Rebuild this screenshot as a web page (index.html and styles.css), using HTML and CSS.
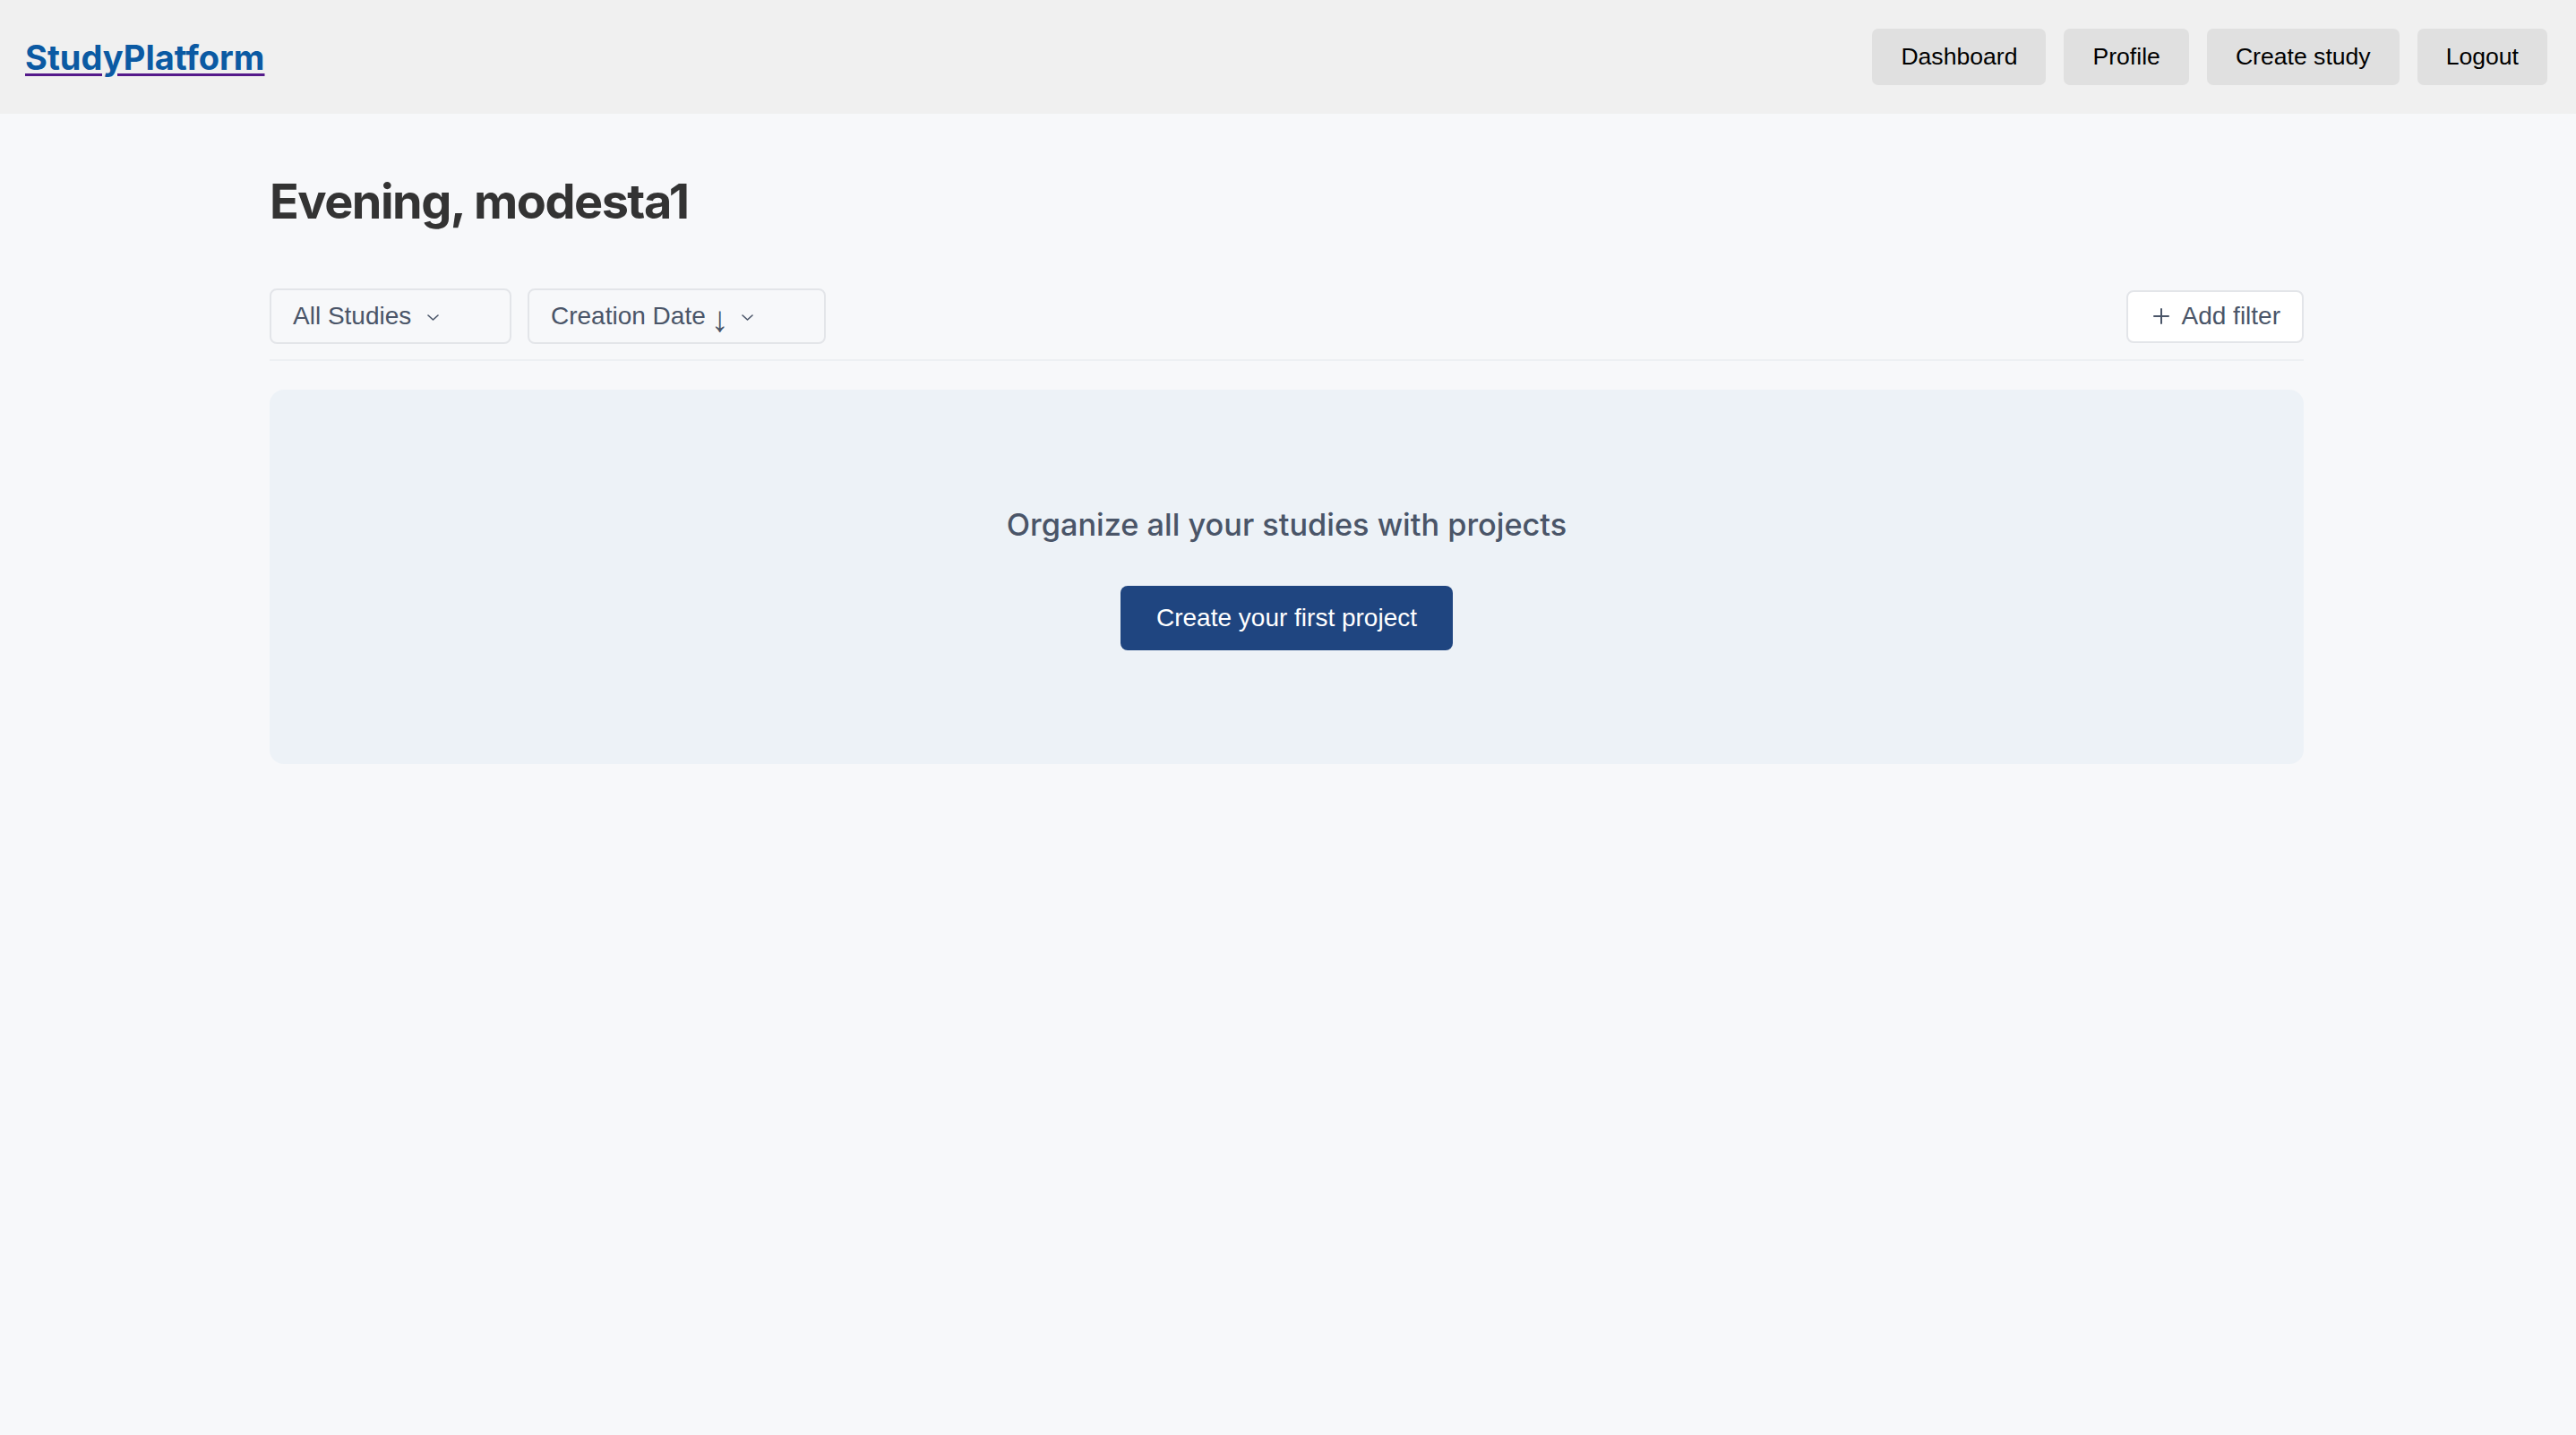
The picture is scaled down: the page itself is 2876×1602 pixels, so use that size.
FILE: index.html
```html
<!DOCTYPE html>
<html lang="en">
<head>
<meta charset="utf-8">
<title>StudyPlatform</title>
<link rel="stylesheet" href="styles.css">
</head>
<body>
<header class="topbar">
  <a class="logo" href="#"><span class="logo-text">StudyPlatform</span></a>
  <nav class="nav">
    <button class="nav-btn">Dashboard</button>
    <button class="nav-btn">Profile</button>
    <button class="nav-btn">Create study</button>
    <button class="nav-btn">Logout</button>
  </nav>
</header>
<main class="container">
  <h1 class="greeting">Evening, modesta1</h1>
  <div class="filters">
    <div class="filter-left">
      <button class="select select-studies">All Studies
        <svg class="chev" viewBox="0 0 13 7" width="13" height="7"><polyline points="1,1 6.5,6 12,1" fill="none" stroke="#4a5568" stroke-width="1.6" stroke-linecap="round" stroke-linejoin="round"/></svg>
      </button>
      <button class="select select-date">Creation Date <span class="arrow">↓</span>
        <svg class="chev chev-date" viewBox="0 0 13 7" width="13" height="7"><polyline points="1,1 6.5,6 12,1" fill="none" stroke="#4a5568" stroke-width="1.6" stroke-linecap="round" stroke-linejoin="round"/></svg>
      </button>
    </div>
    <button class="add-filter">
      <svg class="plus" viewBox="0 0 18 18" width="18" height="18"><path d="M9 1v16M1 9h16" fill="none" stroke="#4a5568" stroke-width="2" stroke-linecap="round"/></svg>
      Add filter
    </button>
  </div>
  <section class="empty">
    <h2 class="empty-title">Organize all your studies with projects</h2>
    <button class="primary">Create your first project</button>
  </section>
</main>
</body>
</html>
```

FILE: styles.css
```css
* { box-sizing: border-box; }
html, body { margin: 0; padding: 0; }
body {
  background: #f7f8fa;
  font-family: "Liberation Sans", Arial, sans-serif;
  color: #333;
  min-height: 1602px;
}
.topbar {
  height: 127px;
  background: #f0f0f0;
  display: flex;
  align-items: center;
  justify-content: space-between;
  padding: 0 32px 0 28px;
}
.logo {
  font-family: Inter, "Noto Sans", sans-serif;
  font-weight: 700;
  font-size: 38px;
  color: #551a8b;
  text-decoration: underline;
  text-decoration-color: #551a8b;
  text-decoration-thickness: 3px;
  text-underline-offset: 4px;
}
.logo-text { color: #0b5aa3; }
.nav { display: flex; gap: 20px; }
.nav-btn {
  font-family: "Liberation Sans", Arial, sans-serif;
  font-size: 26.6px;
  color: #000;
  background: #e0e0e0;
  border: none;
  border-radius: 7px;
  padding: 16px 32px;
  line-height: 31px;
}
.container {
  padding: 0 304px 0 301px;
}
.greeting {
  font-family: Inter, "Noto Sans", sans-serif;
  font-weight: 700;
  font-size: 54px;
  line-height: 67px;
  letter-spacing: -1.5px;
  color: #333;
  margin: 64px 0 64px;
}
.filters {
  display: flex;
  align-items: center;
  justify-content: space-between;
  padding-bottom: 17px;
  border-bottom: 2px solid #edf0f3;
}
.filter-left { display: flex; gap: 18px; }
.select, .add-filter {
  font-family: "Liberation Sans", Arial, sans-serif;
  font-size: 28px;
  color: #4a5568;
  border: 2px solid #e3e5e9;
  border-radius: 8px;
  display: flex;
  align-items: center;
  height: 62px;
}
.select {
  background: #f7f8fa;
  padding: 0 24px;
}
.select-studies { width: 270px; }
.select-date { width: 333px; }
.select .chev { margin-left: 18px; margin-top: 2px; }
.select .chev-date { margin-left: 14px; }
.arrow {
  margin-left: 6px;
  font-size: 40px;
  line-height: 28px;
  position: relative;
  top: 3px;
}
.add-filter {
  height: 59px;
  background: #fff;
  padding: 0 24px 0 28px;
  gap: 14px;
}
.empty {
  margin-top: 32px;
  background: #edf2f7;
  border-radius: 16px;
  height: 418px;
  display: flex;
  flex-direction: column;
  align-items: center;
  justify-content: center;
  padding-top: 4px;
}
.empty-title {
  font-family: Inter, "Noto Sans", sans-serif;
  font-weight: 500;
  font-size: 34.3px;
  line-height: 40px;
  color: #4a5568;
  margin: 0 0 48px;
}
.primary {
  font-family: "Liberation Sans", Arial, sans-serif;
  font-size: 28px;
  line-height: 32px;
  color: #fff;
  background: #1f4580;
  border: none;
  border-radius: 8px;
  padding: 20px 40px;
}
```
